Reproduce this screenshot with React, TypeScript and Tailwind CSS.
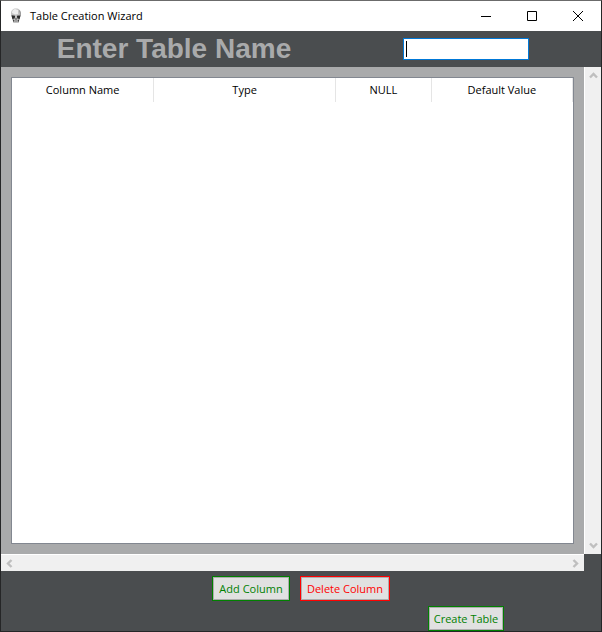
import { useState } from "react";

const columns = ["Column Name", "Type", "NULL", "Default Value"];

function SkullIcon() {
  return (
    <svg width="12" height="16" viewBox="0 0 12 16" aria-hidden="true">
      <path d="M6 .5C2.800.5 1 2.600 1 5.400c0 1.700.3 2.900 1 4l.7 2.400.8 3.200h5l.8-3.200.7-2.400c.7-1.100 1-2.300 1-4C11 2.600 9.200.5 6 .5z" fill="#c4c4c4" />
      <path d="M5 1C3 1.300 2 3 2 5l3 1.500L8 6V2z" fill="#eeeeee" />
      <path d="M1.500 7.200l3.600.6-.4 2.800-2.400.3zM10.500 7.200l-3.600.6.4 2.800 2.400.3z" fill="#2b2b2b" />
      <path d="M6 9.500l-1 2h2zM2.500 11.200l1.200 3.200.6-2.400zM9.500 11.200l-1.200 3.200-.6-2.400z" fill="#3f3f3f" />
      <path d="M4.300 13h3.400" stroke="#777777" />
      <path d="M9.500 2.500Q11 5 10 8" stroke="#8f8f8f" fill="none" />
    </svg>
  );
}

function Arrow({ d }: { d: string }) {
  return (
    <svg width="9" height="9" viewBox="0 0 9 9" fill="none" stroke="#bfbfbf" strokeWidth="2.4" aria-hidden="true">
      <path d={d} />
    </svg>
  );
}

function TitleBar() {
  const control = "flex h-full w-[46px] items-center justify-center hover:bg-gray-200";
  return (
    <header className="flex h-[30px] shrink-0 items-center bg-white pl-[9px] text-black">
      <SkullIcon />
      <h1 className="ml-2 grow text-[11px] leading-4">Table Creation Wizard</h1>
      <div className="flex h-full">
        <button type="button" aria-label="Minimize" className={control}>
          <svg width="10" height="10" stroke="black"><path d="M0 5.500h10" /></svg>
        </button>
        <button type="button" aria-label="Maximize" className={control}>
          <svg width="10" height="10" stroke="black" fill="none"><path d="M.5.500h9v9h-9z" /></svg>
        </button>
        <button type="button" aria-label="Close" className={control}>
          <svg width="10" height="10" stroke="black"><path d="M0 0l10 10M10 0L0 10" /></svg>
        </button>
      </div>
    </header>
  );
}

export default function App() {
  const [name, setName] = useState("");
  const button = "h-[25px] border bg-[#e1e1e1] text-[11px] leading-4 whitespace-nowrap inset-ring inset-ring-[#adadad]";
  const green = "border-[#008000] text-[#008000]";
  const red = "border-[#ff0000] text-[#ff0000]";
  return (
    <div className="flex h-screen flex-col border border-[#252627] border-t-[#6b6b6b] bg-[#4a4d4f] font-['Open_Sans','Noto_Sans',sans-serif]">
      <TitleBar />
      <div className="grid h-9 shrink-0 grid-cols-[346fr_238fr] items-center pr-4">
        <label htmlFor="table-name" className="text-center font-['Liberation_Sans',Arial,sans-serif] text-[28px] leading-8 font-bold whitespace-nowrap text-[#a9aaab]">
          Enter Table Name
        </label>
        <div className="relative flex justify-self-center">
          <input
            id="table-name"
            autoFocus
            value={name}
            onChange={(e) => setName(e.target.value)}
            className="h-[22px] w-[126px] border border-[#0078d7] bg-white px-0.5 text-[11px] leading-4 text-black caret-black outline-none"
          />
          {name === "" && <span className="pointer-events-none absolute inset-y-[3px] left-[3px] w-px bg-black" />}
        </div>
      </div>
      <main className="grid min-h-0 grow grid-cols-[1fr_17px] grid-rows-[1fr_17px]">
        <div className="bg-[#a9aaab] p-[10px]">
          <div className="h-full border border-[#828790] bg-white">
            <table className="w-full table-fixed border-collapse text-[11px] leading-4 text-black">
              <colgroup>
                <col className="w-[25.300%]" />
                <col className="w-[32.400%]" />
                <col className="w-[17.100%]" />
                <col />
              </colgroup>
              <thead>
                <tr>
                  {columns.map((column) => (
                    <th key={column} scope="col" className="h-6 border-r border-[#e5e5e5] p-0 text-center font-normal">
                      {column}
                    </th>
                  ))}
                </tr>
              </thead>
              <tbody />
            </table>
          </div>
        </div>
        <div className="flex flex-col items-center justify-between border-l border-white bg-[#f0f0f0] py-1">
          <button type="button" aria-label="Scroll up"><Arrow d="M1 6.500L4.500 3L8 6.500" /></button>
          <button type="button" aria-label="Scroll down"><Arrow d="M1 2.500L4.500 6L8 2.500" /></button>
        </div>
        <div className="flex items-center justify-between border-t border-white bg-[#f0f0f0] px-1">
          <button type="button" aria-label="Scroll left"><Arrow d="M6.500 1L3 4.500L6.500 8" /></button>
          <button type="button" aria-label="Scroll right"><Arrow d="M2.500 1L6 4.500L2.500 8" /></button>
        </div>
      </main>
      <footer className="shrink-0 pt-[5px]">
        <div className="flex justify-center gap-[10px]">
          <button type="button" className={`${button} ${green} w-[78px]`}>Add Column</button>
          <button type="button" className={`${button} ${red} w-[90px]`}>Delete Column</button>
        </div>
        <div className="mt-[5px] grid grid-cols-[346fr_238fr] pr-4">
          <button type="button" className={`${button} ${green} col-start-2 w-[76px] justify-self-center`}>Create Table</button>
        </div>
      </footer>
    </div>
  );
}
